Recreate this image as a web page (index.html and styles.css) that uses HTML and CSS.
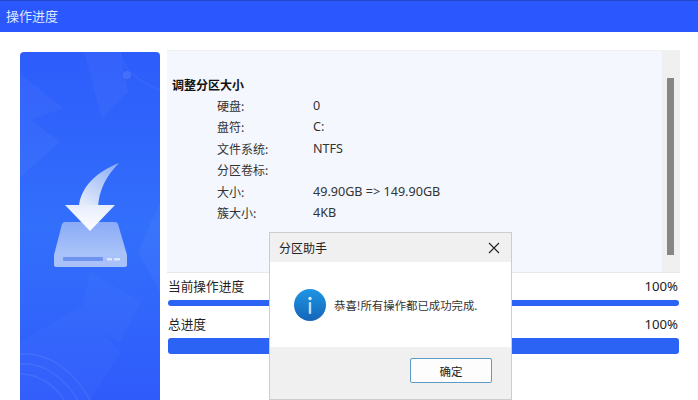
FILE: index.html
```html
<!DOCTYPE html>
<html lang="zh">
<head>
<meta charset="utf-8">
<title>操作进度</title>
<link rel="stylesheet" href="styles.css">
</head>
<body>
<header class="topbar">操作进度</header>
<main class="content">
  <aside class="side">
    <svg class="side-art" width="140" height="348" viewBox="0 0 140 348" aria-hidden="true">
      <defs>
        <linearGradient id="bg" x1="0" y1="0" x2="0" y2="1">
          <stop offset="0" stop-color="#2e5cfb"/>
          <stop offset="0.5" stop-color="#3370fb"/>
          <stop offset="1" stop-color="#2f5bfb"/>
        </linearGradient>
        <linearGradient id="tail" x1="0.8" y1="0" x2="0.2" y2="1">
          <stop offset="0" stop-color="#8fb0f6"/>
          <stop offset="1" stop-color="#e4ebfb"/>
        </linearGradient>
        <linearGradient id="head" x1="0" y1="0" x2="0" y2="1">
          <stop offset="0" stop-color="#e6edfc"/>
          <stop offset="1" stop-color="#ffffff"/>
        </linearGradient>
        <linearGradient id="disk" x1="0" y1="0" x2="0" y2="1">
          <stop offset="0" stop-color="#8aabf7"/>
          <stop offset="1" stop-color="#b6ccfa"/>
        </linearGradient>
      </defs>
      <rect width="140" height="348" fill="url(#bg)"/>
      <g fill="#fff" opacity="0.03">
        <path d="M0 22 L43 56 L0 72Z"/>
        <path d="M0 60 L40 90 L0 125Z"/>
        <path d="M64 0 L82 66 L108 40 L100 0Z"/>
        <path d="M140 150 L118 200 L140 240Z"/>
      </g>
      <g fill="#fff" opacity="0.02">
        <path d="M60 270 L70 220 L120 250 L100 290Z"/>
        <path d="M0 290 L60 255 L100 300 L70 348 L0 348Z"/>
      </g>
      <path d="M100 0 Q104 24 140 38" fill="none" stroke="#fff" stroke-opacity="0.08"/>
      <circle cx="107" cy="23" r="4" fill="#fff" opacity="0.1"/>
      <g fill="none" stroke="#fff" stroke-opacity="0.08" stroke-width="1.5">
        <path d="M0 302 C30 300 55 320 70 348"/>
        <path d="M0 312 C24 310 44 326 58 348"/>
        <path d="M0 322 C18 322 34 332 44 348"/>
      </g>
      <path d="M45 170 H95 Q97 170 98 172 L107 203 V212 Q107 215 104 215 H37 Q34 215 34 212 V203 L42 172 Q43 170 45 170Z" fill="url(#disk)"/>
      <path d="M34 203 H107 V212 Q107 215 104 215 H37 Q34 215 34 212Z" fill="#a8c2f9"/>
      <rect x="43" y="205" width="40" height="4" rx="1" fill="#6f93ee"/>
      <rect x="87" y="206" width="5" height="2.5" fill="#dbe5fb"/>
      <rect x="94" y="206" width="6" height="2.5" fill="#dbe5fb"/>
      <path d="M99 111 C76 120 60 136 59 155 H78 C79 138 86 124 99 111Z" fill="url(#tail)"/>
      <path d="M45 153 H95 L70 179Z" fill="url(#head)"/>
    </svg>
  </aside>
  <section class="main">
    <div class="info">
      <div class="info-text">
        <h2 class="info-title">调整分区大小</h2>
        <dl class="props">
          <dt>硬盘:</dt><dd>0</dd>
          <dt>盘符:</dt><dd>C:</dd>
          <dt>文件系统:</dt><dd>NTFS</dd>
          <dt>分区卷标:</dt><dd></dd>
          <dt>大小:</dt><dd>49.90GB =&gt; 149.90GB</dd>
          <dt>簇大小:</dt><dd>4KB</dd>
        </dl>
      </div>
      <div class="scroll"><div class="thumb"></div></div>
    </div>
    <div class="label-row label-first"><span>当前操作进度</span><span class="pct">100%</span></div>
    <div class="bar bar-thin"></div>
    <div class="label-row label-second"><span>总进度</span><span class="pct">100%</span></div>
    <div class="bar bar-thick"></div>
  </section>
</main>
<div class="dialog" role="dialog">
  <div class="dialog-head">
    <span>分区助手</span>
    <svg width="12" height="12" viewBox="0 0 12 12" aria-hidden="true"><path d="M1 1 L11 11 M11 1 L1 11" stroke="#222" stroke-width="1.1" fill="none"/></svg>
  </div>
  <div class="dialog-body">
    <svg width="32" height="32" viewBox="0 0 32 32" aria-hidden="true">
      <defs>
        <linearGradient id="ic" x1="0" y1="0" x2="0" y2="1">
          <stop offset="0" stop-color="#1e96e4"/>
          <stop offset="1" stop-color="#1565b8"/>
        </linearGradient>
      </defs>
      <circle cx="16" cy="16" r="16" fill="url(#ic)"/>
      <rect x="14.8" y="13" width="2.4" height="12" rx="1" fill="#b9e2fa"/>
      <circle cx="16" cy="9.5" r="1.7" fill="#d8f0fd"/>
    </svg>
    <span>恭喜!所有操作都已成功完成.</span>
  </div>
  <div class="dialog-foot"><button class="ok" type="button">确定</button></div>
</div>
</body>
</html>
```
FILE: styles.css
```css
* { box-sizing: border-box; }
html, body { margin: 0; height: 400px; overflow: hidden; background: #fff; }
body { font-family: "Noto Sans CJK SC", "Noto Sans", sans-serif; color: #222; position: relative; }
.topbar { height: 32px; background: #2b57fe; border-top: 1px solid #2347c4; color: #dfe6ff; font-size: 13px; line-height: 30px; padding-left: 6px; }
.content { display: flex; align-items: flex-start; padding: 18px 18px 0 20px; gap: 7px; }
.side { width: 140px; height: 348px; margin-top: 2px; border-radius: 4px 4px 0 0; overflow: hidden; flex: none; }
.side-art { display: block; }
.main { flex: 1; min-width: 0; }
.info { height: 223px; background: #f4f7fe; border-top: 1px solid #f0f1f3; border-bottom: 1px solid #e6e8ec; display: flex; justify-content: space-between; }
.info-text { padding: 25px 0 0 5px; }
.info-title { margin: 0 0 2px; font-size: 12px; line-height: 17px; font-weight: 700; color: #111; }
.props { margin: 0 0 0 45px; display: grid; grid-template-columns: 96px auto; grid-auto-rows: 21.4px; font-size: 12px; line-height: 21.4px; color: #333; }
.props dt, .props dd { margin: 0; }
.props dd { font-family: "Noto Sans", "Noto Sans CJK SC", sans-serif; font-size: 12.6px; }
.scroll { width: 18px; background: #f0f0f0; padding: 27px 6px 0 4px; border-left: 1px solid #eef0f4; }
.thumb { height: 177px; background: #868686; }
.label-row { display: flex; justify-content: space-between; font-size: 12.7px; line-height: 20px; height: 20px; padding: 0 2px 0 1px; color: #222; }
.label-first { margin-top: 3px; }
.label-second { margin-top: 8px; }
.pct { font-family: "Noto Sans", sans-serif; font-size: 13.2px; }
.bar { margin: 4px 1px 0 1px; background: #2b63f4; }
.bar-thin { height: 6px; border-radius: 3px; }
.bar-thick { height: 16px; border-radius: 3px; margin-top: 4px; }
.dialog { position: absolute; left: 269px; top: 232px; width: 243px; height: 168px; background: #f0f0f0; border: 1px solid #cdcdcd; display: flex; flex-direction: column; }
.dialog-head { height: 29px; display: flex; align-items: center; justify-content: space-between; padding: 0 11px 0 9px; font-size: 12px; color: #222; }
.dialog-body { height: 85px; background: #fff; display: flex; align-items: center; gap: 8px; padding: 0 24px 0 24px; font-size: 11.4px; color: #333; }
.dialog-foot { flex: 1; display: flex; justify-content: flex-end; align-items: flex-start; padding: 11px 19px 0 0; }
.ok { width: 82px; height: 25px; background: #fdfdfd; border: 1px solid #5b9bc4; border-radius: 2px; font: inherit; font-size: 11.5px; color: #222; padding: 0; }
```
